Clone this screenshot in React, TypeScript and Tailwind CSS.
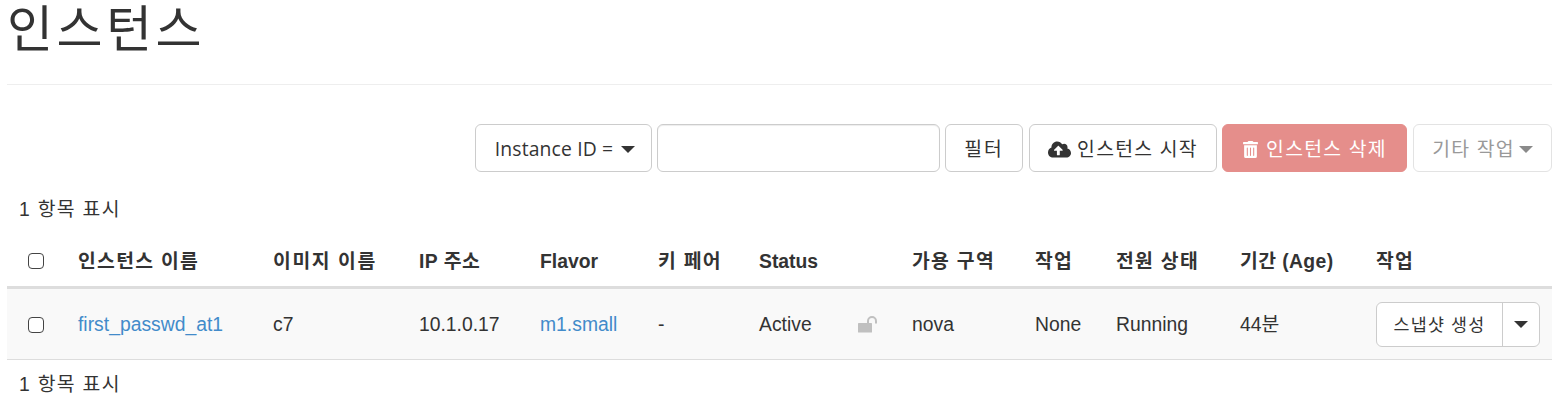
import { FaCloudUploadAlt, FaTrashAlt } from "react-icons/fa"

const font = "font-['Liberation_Sans','Noto_Sans_CJK_KR',sans-serif]"
const btnFont = "font-['Open_Sans','Noto_Sans_CJK_KR',sans-serif]"
const ko = "tracking-[1.3px]"

// small bootstrap style caret
function Caret({ className = "border-t-[#333]" }: { className?: string }) {
  return <span className={`inline-block w-0 h-0 border-x-[7px] border-x-transparent border-t-[7px] ${className}`} />
}

function Checkbox() {
  return <span className="block w-[16px] h-[16px] rounded-[4px] border-[1.5px] border-[#444] bg-white ml-[21px]" />
}

function UnlockIcon() {
  return (
    <svg width="20" height="17" viewBox="0 0 20 17" className="block">
      <rect x="0" y="7" width="14" height="9.5" rx="0.5" fill="#c0c0c0" />
      <path d="M10 7.5 V5 a4 4 0 0 1 8 0 V7.5" fill="none" stroke="#c0c0c0" strokeWidth="2" />
    </svg>
  )
}

const btn = `h-[48px] pt-[2px] flex items-center justify-center rounded-[6px] border border-[#ccc] bg-white text-[19.33px] text-[#333] ${btnFont}`

const headers = [
  { label: "인스턴스 이름", cls: ko },
  { label: "이미지 이름", cls: "tracking-[1.6px]" },
  { label: "IP 주소", cls: "tracking-[0.5px]" },
  { label: "Flavor", cls: "" },
  { label: "키 페어", cls: ko },
  { label: "Status", cls: "" },
  { label: "", cls: "" },
  { label: "가용 구역", cls: ko },
  { label: "작업", cls: ko },
  { label: "전원 상태", cls: ko },
  { label: "기간 (Age)", cls: "tracking-[0.4px]" },
  { label: "작업", cls: ko },
]

const cell = "pl-[8px] pr-[8px] pt-[4px] pb-0"

export default function App() {
  return (
    <div className={`w-[1563px] h-[418px] overflow-hidden bg-white pl-[7px] pr-[11px] text-[19.33px] text-[#333] ${font}`}>
      <h1 className={`h-[85px] pt-[5px] border-b border-[#eee] text-[50px] leading-[50px] font-normal tracking-[3.5px] text-[#333] ${font}`}>인스턴스</h1>

      <div className="flex justify-end mt-[39px]">
        <button className={`${btn} w-[177px] pl-[3px] gap-[8px] mr-[5px]`}>
          <span className="tracking-[0.15px]">Instance ID =</span>
          <Caret />
        </button>
        <input className="w-[283px] h-[48px] rounded-[6px] border border-[#ccc] shadow-[inset_0_1px_1px_rgba(0,0,0,0.075)] mr-[5px]" />
        <button className={`${btn} w-[78px] mr-[6px]`}><span className="tracking-[2px]">필터</span></button>
        <button className={`${btn} w-[188px] gap-[6px] mr-[5px]`}>
          <FaCloudUploadAlt className="text-[23px]" />
          <span className={ko}>인스턴스 시작</span>
        </button>
        <button className={`h-[48px] pt-[2px] w-[185px] flex items-center justify-center gap-[7px] rounded-[6px] bg-[#e58e8b] border border-[#e58e8b] text-white text-[19.33px] mr-[6px] ${btnFont}`}>
          <FaTrashAlt className="text-[17px]" />
          <span className={ko}>인스턴스 삭제</span>
        </button>
        <button className={`h-[48px] pt-[2px] w-[139px] flex items-center justify-center gap-[4px] rounded-[6px] border border-[#e3e3e3] bg-white text-[#999] text-[19.33px] ${btnFont}`}>
          <span className={ko}>기타 작업</span>
          <Caret className="border-t-[#8a8a8a]" />
        </button>
      </div>

      <div className={`h-[25px] mt-[25px] leading-[25px] pl-[12px] ${ko}`}>1 항목 표시</div>

      <table className="table-fixed w-[1545px] mt-[13px] border-collapse">
        <colgroup>
          <col className="w-[63px]" />
          <col className="w-[195px]" />
          <col className="w-[146px]" />
          <col className="w-[121px]" />
          <col className="w-[118px]" />
          <col className="w-[101px]" />
          <col className="w-[99px]" />
          <col className="w-[54px]" />
          <col className="w-[123px]" />
          <col className="w-[81px]" />
          <col className="w-[124px]" />
          <col className="w-[136px]" />
          <col className="w-[184px]" />
        </colgroup>
        <thead>
          <tr className="h-[52px] border-b-[3px] border-[#ddd]">
            <th className="pl-0 pr-0 pt-[2px] pb-0 text-left"><Checkbox /></th>
            {headers.map((h, i) => (
              <th key={i} className={`${cell} text-left font-bold whitespace-nowrap ${h.cls}`}>{h.label}</th>
            ))}
          </tr>
        </thead>
        <tbody>
          <tr className="h-[72px] bg-[#f9f9f9] border-b border-[#ddd]">
            <td className="pl-0 pr-0 pt-[2px] pb-0"><Checkbox /></td>
            <td className={`${cell} text-[#428bca] whitespace-nowrap`}>first_passwd_at1</td>
            <td className={cell}>c7</td>
            <td className={cell}>10.1.0.17</td>
            <td className={`${cell} text-[#428bca]`}>m1.small</td>
            <td className={cell}>-</td>
            <td className={cell}>Active</td>
            <td className="pl-[8px] pr-[8px] pt-[2px] pb-0"><UnlockIcon /></td>
            <td className={cell}>nova</td>
            <td className={cell}>None</td>
            <td className={cell}>Running</td>
            <td className={cell}>44분</td>
            <td className="pl-[8px] pr-[8px] pt-[2px] pb-0">
              <div className="flex w-[164px] h-[45px] rounded-[6px] border border-[#ccc] bg-white">
                <span className={`w-[126px] flex items-center justify-center border-r border-[#ccc] text-[17.33px] tracking-[1.3px] ${btnFont}`}>스냅샷 생성</span>
                <span className="flex-1 flex items-center justify-center"><Caret /></span>
              </div>
            </td>
          </tr>
        </tbody>
      </table>

      <div className={`h-[25px] mt-[12px] leading-[25px] pl-[12px] ${ko}`}>1 항목 표시</div>
    </div>
  )
}
